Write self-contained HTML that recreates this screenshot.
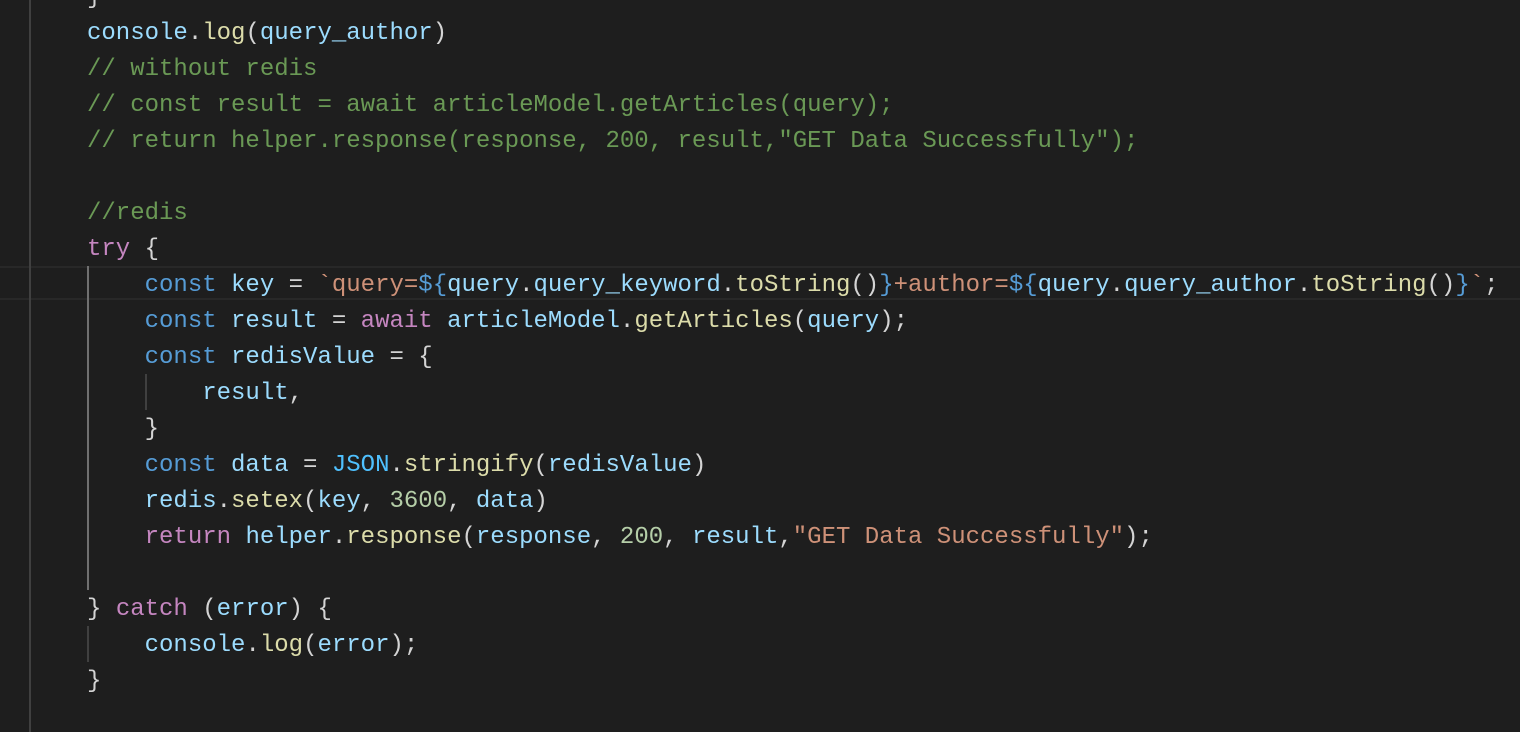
<!DOCTYPE html>
<html><head><meta charset="utf-8"><style>
html,body{margin:0;padding:0;background:#1e1e1e;width:1520px;height:732px;overflow:hidden}
.code{position:absolute;left:87px;top:-20px;font-family:"Liberation Mono",monospace;font-size:24px;line-height:36px;color:#d4d4d4;white-space:pre}
.v{color:#9cdcfe}.f{color:#dcdcaa}.k{color:#569cd6}.c{color:#c586c0}.s{color:#ce9178}.m{color:#6a9955}.n{color:#b5cea8}.j{color:#4fc1ff}
.g{position:absolute;width:2px}
.hl{position:absolute;left:0;width:1520px;top:266px;height:30px;border-top:2px solid #282828;border-bottom:2px solid #282828}
</style></head><body>
<div class="hl"></div>
<div class="g" style="left:29px;top:0;height:732px;background:#404040"></div>
<div class="g" style="left:87px;top:266px;height:324px;background:#707070"></div>
<div class="g" style="left:87px;top:626px;height:36px;background:#404040"></div>
<div class="g" style="left:145px;top:374px;height:36px;background:#404040"></div>
<div class="code">}
<span class="v">console</span>.<span class="f">log</span>(<span class="v">query_author</span>)
<span class="m">// without redis</span>
<span class="m">// const result = await articleModel.getArticles(query);</span>
<span class="m">// return helper.response(response, 200, result,"GET Data Successfully");</span>

<span class="m">//redis</span>
<span class="c">try</span> {
    <span class="k">const</span> <span class="v">key</span> = <span class="s">`query=</span><span class="k">${</span><span class="v">query</span>.<span class="v">query_keyword</span>.<span class="f">toString</span>()<span class="k">}</span><span class="s">+author=</span><span class="k">${</span><span class="v">query</span>.<span class="v">query_author</span>.<span class="f">toString</span>()<span class="k">}</span><span class="s">`</span>;
    <span class="k">const</span> <span class="v">result</span> = <span class="c">await</span> <span class="v">articleModel</span>.<span class="f">getArticles</span>(<span class="v">query</span>);
    <span class="k">const</span> <span class="v">redisValue</span> = {
        <span class="v">result</span>,
    }
    <span class="k">const</span> <span class="v">data</span> = <span class="j">JSON</span>.<span class="f">stringify</span>(<span class="v">redisValue</span>)
    <span class="v">redis</span>.<span class="f">setex</span>(<span class="v">key</span>, <span class="n">3600</span>, <span class="v">data</span>)
    <span class="c">return</span> <span class="v">helper</span>.<span class="f">response</span>(<span class="v">response</span>, <span class="n">200</span>, <span class="v">result</span>,<span class="s">"GET Data Successfully"</span>);

} <span class="c">catch</span> (<span class="v">error</span>) {
    <span class="v">console</span>.<span class="f">log</span>(<span class="v">error</span>);
}
</div>
</body></html>
